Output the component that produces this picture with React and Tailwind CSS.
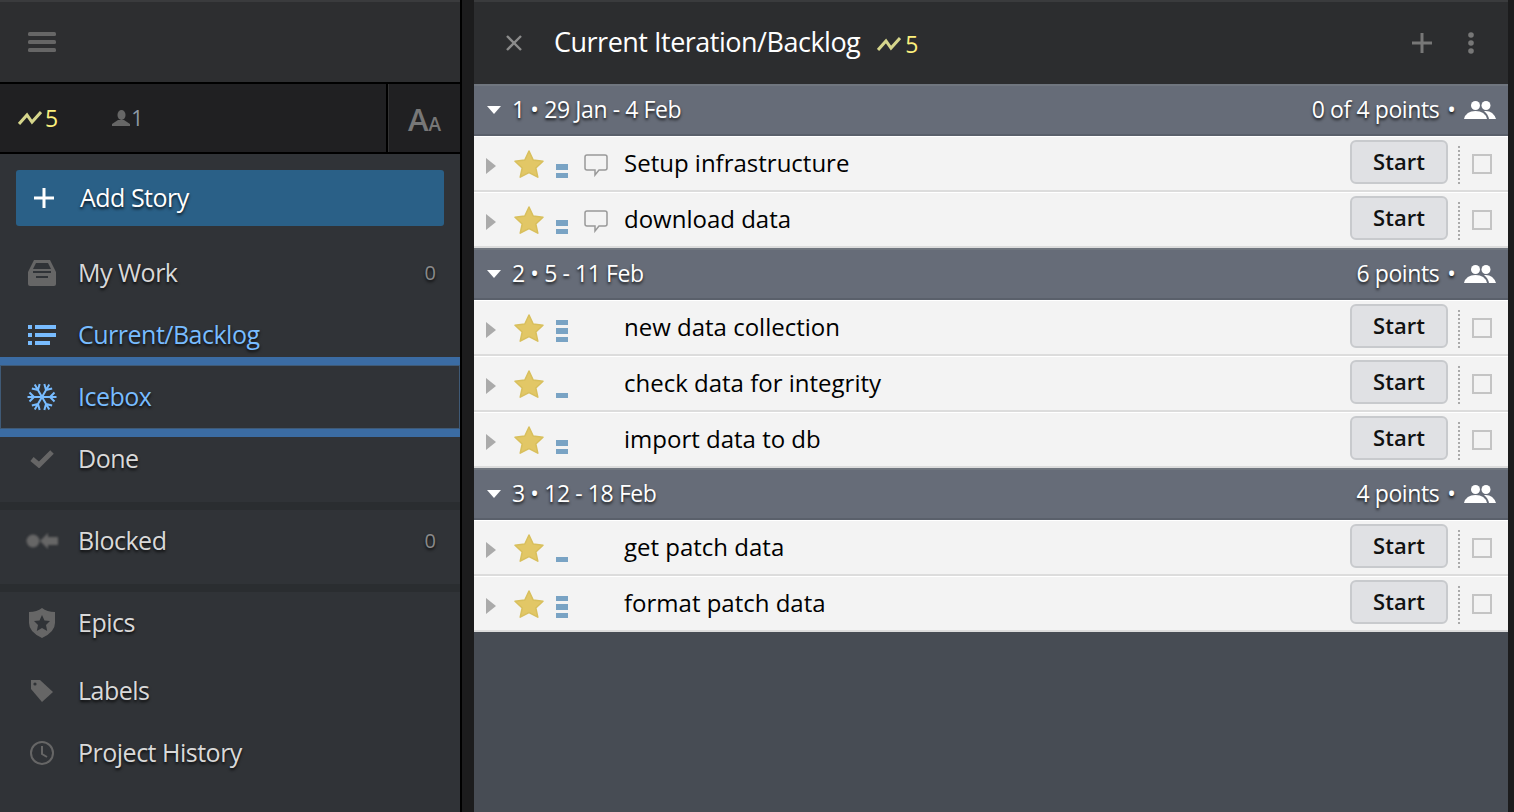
import React from 'react';

const shadow = '[text-shadow:0_2px_3px_rgba(0,0,0,0.8)]';

const Velocity = ({ className }) => (
  <svg viewBox="0 0 24 14" className={className}>
    <path d="M1 13 L9 4 L14 11 L23 1" fill="none" stroke="#d6d68c" strokeWidth="3" />
  </svg>
);

const Hamburger = () => (
  <svg width="28" height="20" viewBox="0 0 28 20">
    <rect y="0" width="28" height="4" rx="1.5" fill="#666" />
    <rect y="8" width="28" height="4" rx="1.5" fill="#666" />
    <rect y="16" width="28" height="4" rx="1.5" fill="#666" />
  </svg>
);

const MyWorkIcon = () => (
  <svg width="28" height="27" viewBox="0 0 28 27">
    <path d="M6 0 H22 L28 12 V24 Q28 26 26 26 H2 Q0 26 0 24 V12 Z" fill="#666" />
    <path d="M8 3 H20 L23 9 H5 Z" fill="#303337" />
    <path d="M5 11 H23 V13 H5 Z M8 16 H20 V18 H8 Z" fill="#303337" />
  </svg>
);

const ListIcon = () => (
  <svg width="28" height="20" viewBox="0 0 28 20" fill="#78bcff">
    <rect x="0" y="0" width="4" height="4" />
    <rect x="7" y="0" width="21" height="4" />
    <rect x="0" y="8" width="4" height="4" />
    <rect x="7" y="8" width="21" height="4" />
    <rect x="0" y="16" width="4" height="4" />
    <rect x="7" y="16" width="15" height="4" />
  </svg>
);

const SnowIcon = () => (
  <svg width="30" height="28" viewBox="0 0 30 28" fill="none" stroke="#78bcff" strokeWidth="2">
    {[0, 60, 120, 180, 240, 300].map((a) => (
      <g key={a} transform={`rotate(${a} 15 14)`}>
        <path d="M15 14 H29.5 M23 14 L27.5 9.5 M23 14 L27.5 18.5" />
      </g>
    ))}
  </svg>
);

const CheckIcon = () => (
  <svg width="24" height="18" viewBox="0 0 24 18">
    <path d="M2 9 L9 15 L22 2" fill="none" stroke="#666" strokeWidth="5" />
  </svg>
);

const BlockedIcon = () => (
  <svg className="blur-[0.8px]" width="32" height="18" viewBox="0 0 32 18" fill="#666">
    <circle cx="7" cy="9" r="6.5" />
    <path d="M14 9 L22 1 V5 H32 V13 H22 V17 Z" />
  </svg>
);

const EpicIcon = () => (
  <svg width="26" height="30" viewBox="0 0 26 30">
    <path d="M13 0 Q18 4 26 4 V15 Q26 24 13 30 Q0 24 0 15 V4 Q8 4 13 0 Z" fill="#666" />
    <path d="M13 7 L15.5 12.5 L21 13 L17 17 L18.2 23 L13 20 L7.8 23 L9 17 L5 13 L10.5 12.5 Z" fill="#303337" />
  </svg>
);

const TagIcon = () => (
  <svg width="24" height="24" viewBox="0 0 24 24">
    <path d="M1 1 H10 L23 13 L12 23 L1 10 Z" fill="#666" />
    <circle cx="5" cy="5" r="1.6" fill="#303337" />
  </svg>
);

const ClockIcon = () => (
  <svg width="24" height="24" viewBox="0 0 24 24" fill="none" stroke="#666" strokeWidth="2">
    <circle cx="12" cy="12" r="11" />
    <path d="M12 5 V13 L17 16" />
  </svg>
);

const Person = () => (
  <svg width="18" height="16" viewBox="0 0 18 16" fill="#666">
    <ellipse cx="9.5" cy="5" rx="4" ry="5" />
    <path d="M0 16 V14 L6 10 H12 L18 14 V16 Z" />
  </svg>
);

const People = () => (
  <svg width="32" height="18" viewBox="0 0 32 18" fill="#fff">
    <circle cx="11.5" cy="4.5" r="4.5" />
    <circle cx="22" cy="4.5" r="4.5" />
    <path d="M0 18 Q2 10 11.5 10 Q21 10 23 18 Z" />
    <path d="M20 10 Q29 9 32 18 H25 Q24 13 20 10 Z" />
  </svg>
);

const Star = () => (
  <svg width="30" height="28" viewBox="0 0 30 28">
    <path
      d="M15 1 L19.2 10 L29 11.2 L21.8 18 L23.8 27.2 L15 22.6 L6.2 27.2 L8.2 18 L1 11.2 L10.8 10 Z"
      fill="#e2c766"
      stroke="#d8bf5c"
      strokeWidth="1.5"
      strokeLinejoin="round"
    />
  </svg>
);

const Comment = () => (
  <svg width="24" height="23" viewBox="0 0 24 23">
    <path
      d="M3 1 H21 Q23 1 23 3 V14 Q23 16 21 16 H15 L11 21 V16 H3 Q1 16 1 14 V3 Q1 1 3 1 Z"
      fill="none"
      stroke="#999"
      strokeWidth="1.5"
    />
  </svg>
);

const NavRow = ({ icon, label, count, active, className = 'h-[62px]' }) => (
  <div className={`flex items-center pr-6 ${className}`}>
    <div className="flex w-[78px] shrink-0 justify-center pl-[6px]">{icon}</div>
    <span className={`flex-1 text-[25px] tracking-[-0.5px] ${shadow} ${active ? 'text-[#78bcff]' : 'text-[#d9d9d9]'}`}>{label}</span>
    {count !== undefined && <span className={`text-[20px] text-[#8a8a8a] ${shadow}`}>{count}</span>}
  </div>
);

const Estimate = ({ points }) => (
  <div className="flex h-[55px] w-[28px] shrink-0 flex-col justify-end gap-[3px] pb-[14px]">
    {Array.from({ length: points }).map((_, i) => (
      <div key={i} className="h-[5.5px] w-[12px] bg-[#79a3c4]" />
    ))}
  </div>
);

const StoryRow = ({ title, points, comment }) => (
  <div className="flex h-[56px] items-start border-t border-b-2 border-t-white border-b-[#dcdcdc] bg-[#f3f3f3]">
    <div className="mt-[21px] ml-[12px] h-0 w-0 border-y-[8px] border-l-[10px] border-y-transparent border-l-[#aaaaaa]" />
    <div className="mt-[13px] ml-[18px] mr-[12px]"><Star /></div>
    <Estimate points={points} />
    <div className="mt-[17px] w-[40px] shrink-0">{comment && <Comment />}</div>
    <div className="mt-[8px] flex-1 text-[24px] leading-[36px] text-black">{title}</div>
    <div className="mt-[3px] flex h-[44px] w-[98px] items-center justify-center rounded-[6px] border-2 border-[#c8cacd] bg-[#e0e1e4] pb-[2px] text-[22px] font-semibold text-[#111]">
      Start
    </div>
    <div className="mt-[9px] ml-[10px] h-[38px] w-0 border-l-2 border-dotted border-l-[#aaaaaa]" />
    <div className="mt-[17px] ml-[12px] mr-[16px] h-[20px] w-[20px] border-2 border-[#c4c4c4]" />
  </div>
);

const Group = ({ label, points, stories }) => (
  <div>
    <div className="flex h-[52px] items-center border-t-2 border-b-2 border-t-[#70767f] border-b-[#5a606b] bg-[#666c78] pr-[12px] pl-[13px] text-white">
      <div className="h-0 w-0 border-x-[7px] border-t-[8px] border-x-transparent border-t-white" />
      <span className={`mb-[2px] ml-[11px] flex-1 text-[23px] tracking-[-0.4px] ${shadow}`}>{label}</span>
      <span className={`mb-[2px] text-[23px] tracking-[-0.4px] ${shadow}`}>{points}</span>
      <span className={`mb-[2px] ml-[8px] text-[23px] leading-none ${shadow}`}>•</span>
      <span className="ml-[8px] flex"><People /></span>
    </div>
    {stories.map((s) => (
      <StoryRow key={s.title} {...s} />
    ))}
  </div>
);

const groups = [
  {
    label: '1 • 29 Jan - 4 Feb',
    points: '0 of 4 points',
    stories: [
      { title: 'Setup infrastructure', points: 2, comment: true },
      { title: 'download data', points: 2, comment: true },
    ],
  },
  {
    label: '2 • 5 - 11 Feb',
    points: '6 points',
    stories: [
      { title: 'new data collection', points: 3 },
      { title: 'check data for integrity', points: 1 },
      { title: 'import data to db', points: 2 },
    ],
  },
  {
    label: '3 • 12 - 18 Feb',
    points: '4 points',
    stories: [
      { title: 'get patch data', points: 1 },
      { title: 'format patch data', points: 3 },
    ],
  },
];

export default function App() {
  return (
    <div className="flex h-[812px] w-[1514px] overflow-hidden bg-[#1c1c1d] font-['Open_Sans',sans-serif]">
      {/* sidebar */}
      <div className="flex w-[460px] shrink-0 flex-col bg-[#303337]">
        <div className="flex h-[84px] shrink-0 items-center border-t-2 border-b-2 border-t-[#3a3b3d] border-b-black bg-[#2d2e30] pl-[28px]">
          <Hamburger />
        </div>
        <div className="flex h-[70px] shrink-0 items-center border-b-2 border-b-black bg-[#202022]">
          <div className="flex flex-1 items-center pl-[18px]">
            <Velocity className="h-[14px] w-[24px] blur-[0.5px]" />
            <span className="ml-[3px] text-[23px] leading-none text-[#fdf07d]">5</span>
            <span className="ml-[54px] flex"><Person /></span>
            <span className="ml-[1px] text-[21px] leading-none text-[#8d99a6]">1</span>
          </div>
          <div className="h-full border-l-2 border-l-black">
            <div className="flex h-full w-[72px] items-center justify-center border-l border-l-[#333]">
              <span className="pt-[2px] text-[31px] leading-none font-semibold text-[#777]">
                A<span className="text-[19px]">A</span>
              </span>
            </div>
          </div>
        </div>
        <div className="shrink-0 p-4">
          <div className="flex h-[56px] items-center rounded-[3px] bg-[#2a6087] pl-[17px] text-white">
            <svg width="22" height="22" viewBox="0 0 22 22">
              <path d="M11 1 V21 M1 11 H21" stroke="#fff" strokeWidth="3" />
            </svg>
            <span className={`ml-[25px] text-[25px] tracking-[-0.5px] ${shadow}`}>Add Story</span>
          </div>
        </div>
        <NavRow icon={<MyWorkIcon />} label="My Work" count="0" />
        <NavRow icon={<ListIcon />} label="Current/Backlog" active />
        <div className="relative">
          <NavRow icon={<SnowIcon />} label="Icebox" active />
          {/* drop highlight sits over the neighbouring rows */}
          <div className="absolute -top-[9px] right-0 -bottom-[9px] left-0 border-y-[8px] border-y-[#3b6ca3]">
            <div className="h-full border border-[#3f5a76]" />
          </div>
        </div>
        <NavRow icon={<CheckIcon />} label="Done" />
        <div className="mt-[12px] border-t-[8px] border-t-[#2a2d30] pb-[12px]">
          <NavRow icon={<BlockedIcon />} label="Blocked" count="0" />
        </div>
        <div className="border-t-[8px] border-t-[#2a2d30]">
          <NavRow icon={<EpicIcon />} label="Epics" className="mb-[6px] h-[62px]" />
          <NavRow icon={<TagIcon />} label="Labels" />
          <NavRow icon={<ClockIcon />} label="Project History" />
        </div>
      </div>

      <div className="h-full w-[2px] shrink-0 bg-black" />
      <div className="h-full w-[12px] shrink-0" />

      {/* main panel */}
      <div className="flex w-[1034px] shrink-0 flex-col bg-[#474c54]">
        <div className="flex h-[84px] shrink-0 items-center border-t-2 border-t-[#3a3b3d] bg-[#2c2d2f] pr-[34px] pl-[32px]">
          <svg width="16" height="16" viewBox="0 0 16 16">
            <path d="M1 1 L15 15 M15 1 L1 15" stroke="#8c8c8c" strokeWidth="2.4" />
          </svg>
          <span className="mb-[2px] ml-[32px] text-[27px] tracking-[-0.5px] text-white">Current Iteration/Backlog</span>
          <Velocity className="ml-[17px] mt-[2px] h-[14px] w-[24px] blur-[0.5px]" />
          <span className="ml-[4px] mt-[2px] text-[23px] leading-none text-[#fdf07d]">5</span>
          <span className="flex-1" />
          <svg width="20" height="20" viewBox="0 0 20 20">
            <path d="M10 0 V20 M0 10 H20" stroke="#777" strokeWidth="3" />
          </svg>
          <svg className="ml-[36px]" width="6" height="22" viewBox="0 0 6 22" fill="#777">
            <circle cx="3" cy="3" r="2.8" />
            <circle cx="3" cy="11" r="2.8" />
            <circle cx="3" cy="19" r="2.8" />
          </svg>
        </div>
        {groups.map((g) => (
          <Group key={g.label} {...g} />
        ))}
      </div>
    </div>
  );
}
